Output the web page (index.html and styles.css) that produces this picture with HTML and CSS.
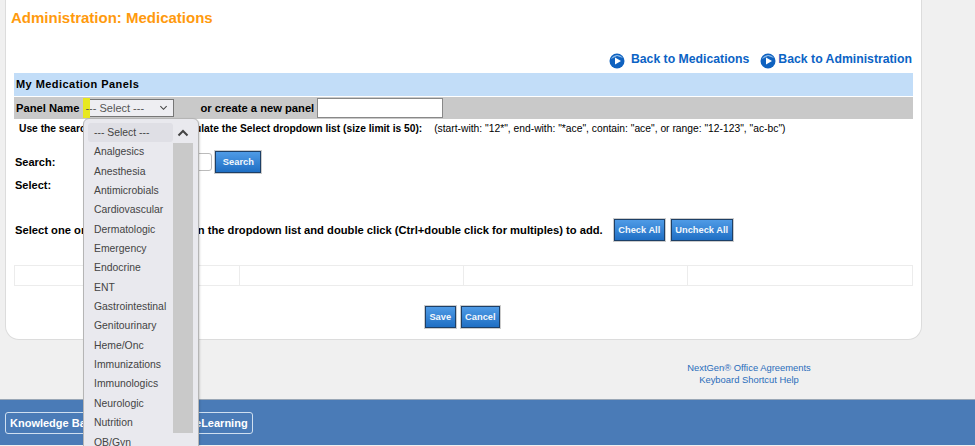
FILE: index.html
```html
<!DOCTYPE html>
<html lang="en">

<head>
  <meta charset="UTF-8">
  <title>Administration: Medications</title>
  <link rel="stylesheet" href="styles.css">
</head>

<body>
  <main class="card">
    <h1>Administration: Medications</h1>

    <div class="back-links">
      <a href="#"><svg class="go-icon" viewBox="0 0 16 16"><circle cx="8" cy="8" r="7.5" fill="#0f62c0"/><path d="M2 6 A7 7 0 0 1 14 5 L8 3 Z" fill="#8fbbe8"/><path d="M6 4.5 L12 8 L6 11.5 Z" fill="#fff"/></svg><span class="first-link">Back to Medications</span></a>
      <a href="#"><svg class="go-icon" viewBox="0 0 16 16"><circle cx="8" cy="8" r="7.5" fill="#0f62c0"/><path d="M2 6 A7 7 0 0 1 14 5 L8 3 Z" fill="#8fbbe8"/><path d="M6 4.5 L12 8 L6 11.5 Z" fill="#fff"/></svg>Back to Administration</a>
    </div>

    <div class="panel-title">My Medication Panels</div>

    <div class="panel-name">
      <label>Panel Name</label>
      <div class="select-box"><span class="mark"></span><span class="select-text">--- Select ---</span>
        <svg class="chev" viewBox="0 0 10 6"><path d="M1.5 1 L5 4.5 L8.5 1" fill="none" stroke="#444" stroke-width="1.2"/></svg>
      </div>
      <span class="or-create">or create a new panel</span>
      <input class="new-panel" type="text">
    </div>

    <p class="help"><b>Use the search criteria below to populate the Select dropdown list (size limit is 50):</b> <span class="help-eg">(start-with: "12*", end-with: "*ace", contain: "ace", or range: "12-123", "ac-bc")</span></p>

    <div class="search-row">
      <label>Search:</label>
      <input class="search-input" type="text">
      <button class="btn">Search</button>
    </div>
    <div class="select-row"><label>Select:</label></div>

    <div class="add-row">
      <b>Select one or more medication(s) in the dropdown list and double click (Ctrl+double click for multiples) to add.</b>
      <button class="btn">Check All</button>
      <button class="btn">Uncheck All</button>
    </div>

    <div class="empty-table">
      <div></div><div></div><div></div><div></div>
    </div>

    <div class="actions">
      <button class="btn">Save</button>
      <button class="btn">Cancel</button>
    </div>
  </main>

  <div class="footer-links">
    <a href="#">NextGen&reg; Office Agreements</a>
    <a href="#">Keyboard Shortcut Help</a>
  </div>

  <footer>
    <a href="#">Knowledge Base</a>
    <a href="#">eLearning</a>
  </footer>

  <div class="dropdown">
    <ul>
      <li class="current">--- Select ---</li>
      <li>Analgesics</li>
      <li>Anesthesia</li>
      <li>Antimicrobials</li>
      <li>Cardiovascular</li>
      <li>Dermatologic</li>
      <li>Emergency</li>
      <li>Endocrine</li>
      <li>ENT</li>
      <li>Gastrointestinal</li>
      <li>Genitourinary</li>
      <li>Heme/Onc</li>
      <li>Immunizations</li>
      <li>Immunologics</li>
      <li>Neurologic</li>
      <li>Nutrition</li>
      <li>OB/Gyn</li>
    </ul>
    <div class="scrollbar">
      <div class="scroll-up"><svg viewBox="0 0 12 8"><path d="M1.5 6.5 L6 2 L10.5 6.5" fill="none" stroke="#444" stroke-width="2"/></svg></div>
      <div class="scroll-thumb"></div>
    </div>
  </div>
</body>
</html>
```

FILE: styles.css
```css
* {
  box-sizing: border-box;
}

html, body {
  height: 446px;
  overflow: hidden;
}

body {
  margin: 0;
  position: relative;
  background-color: #f0f0f0;
  font-family: "Liberation Sans", Arial, sans-serif;
  font-size: 11px;
  color: #000;
}

.card {
  width: 917px;
  height: 340px;
  margin-left: 5px;
  padding: 9px 8px 0 8px;
  background-color: #fff;
  border: 1px solid #dcdcdc;
  border-top: 0;
  border-radius: 0 0 14px 14px;
}

h1 {
  margin: 0 0 0 -3px;
  font-size: 15px;
  line-height: 18px;
  color: #ff9a0d;
}

.back-links {
  display: flex;
  justify-content: flex-end;
  gap: 11px;
  height: 18px;
  margin-top: 23px;
  padding-right: 1px;
  font-size: 12.25px;
  font-weight: bold;
  line-height: 18px;
}

.back-links a {
  display: flex;
  align-items: center;
  color: #0b63c5;
  text-decoration: none;
}

.first-link {
  margin-left: 4px;
}

.go-icon {
  width: 16px;
  height: 16px;
  margin: 3px 2px 0 0;
}

.panel-title {
  height: 23px;
  margin-top: 5px;
  padding-left: 2px;
  background-color: #c2ddf8;
  font-size: 11px;
  font-weight: bold;
  letter-spacing: 0.45px;
  line-height: 23px;
}

.panel-name {
  display: flex;
  align-items: center;
  height: 22px;
  margin-top: 1px;
  padding-left: 2px;
  background-color: #c9c9c9;
  font-size: 11.2px;
  font-weight: bold;
}

.select-box {
  position: relative;
  width: 91px;
  height: 18px;
  margin-left: 4px;
  padding-left: 1px;
  background-color: #eeeef2;
  border: 1px solid #777;
  font-size: 11px;
  font-weight: normal;
  line-height: 16px;
  color: #555;
  white-space: nowrap;
}

.mark {
  position: absolute;
  left: -1px;
  top: -2px;
  width: 7px;
  height: 20px;
  background-color: #e8e820;
}

.select-text {
  position: relative;
}

.chev {
  position: absolute;
  right: 5px;
  top: 5px;
  width: 9px;
  height: 6px;
}

.or-create {
  margin-left: 26px;
}

.new-panel {
  width: 126px;
  height: 20px;
  margin: 0 0 0 3px;
  padding: 0;
  background-color: #fff;
  border: 1px solid #888;
}

.help {
  margin: 3px 0 0 5px;
  font-size: 10.25px;
  line-height: 13px;
  white-space: nowrap;
}

.help-eg {
  margin-left: 9px;
  font-size: 10.3px;
}

.search-row {
  display: flex;
  align-items: center;
  height: 22px;
  margin-top: 16px;
  padding-left: 1px;
  font-weight: bold;
}

.search-input {
  width: 127px;
  height: 18px;
  margin: 0 3px 0 30px;
  padding: 0;
  border: 1px solid #bbb;
  border-radius: 3px;
}

.select-row {
  margin-top: 6px;
  padding-left: 1px;
  font-weight: bold;
  line-height: 13px;
}

.add-row {
  display: flex;
  align-items: center;
  gap: 6px;
  height: 24px;
  margin-top: 26px;
  padding-left: 1px;
  font-size: 11.2px;
  white-space: nowrap;
}

.add-row b {
  margin-right: 5px;
}

.btn {
  height: 22px;
  padding: 0 3.5px;
  background: linear-gradient(#4f9be6, #1f6fc4);
  border: 1px solid #1d3f66;
  border-radius: 0;
  box-shadow: 0 0 0 1px #ccc;
  font-family: inherit;
  font-size: 9.3px;
  font-weight: bold;
  color: #f2f7fc;
}

.search-row .btn {
  width: 46px;
}

.empty-table {
  display: grid;
  grid-template-columns: 225px 224px 224px 1fr;
  height: 21px;
  margin-top: 23px;
  border: 1px solid #ececec;
}

.empty-table div {
  border-right: 1px solid #ececec;
}

.empty-table div:last-child {
  border-right: 0;
}

.actions {
  display: flex;
  justify-content: center;
  gap: 5px;
  margin-top: 20px;
  padding-right: 2px;
}

.footer-links {
  display: flex;
  flex-direction: column;
  align-items: center;
  width: 250px;
  margin: 22px 0 0 624px;
  font-size: 9.4px;
  line-height: 12px;
}

.footer-links a {
  color: #2a6dbb;
  text-decoration: none;
}

footer {
  display: flex;
  gap: 5px;
  height: 46px;
  margin-top: 13px;
  padding: 12px 0 0 5px;
  background-color: #4a7bb7;
  border-top: 1px solid #9aa7b6;
}

footer a {
  height: 22px;
  padding: 0 4px 0 4px;
  border: 1px solid #cfdff0;
  border-radius: 3px;
  font-size: 11px;
  font-weight: bold;
  line-height: 20px;
  color: #fff;
  text-decoration: none;
}

footer a + a {
  margin-left: 82px;
}

.dropdown {
  position: absolute;
  left: 83px;
  top: 118px;
  display: flex;
  width: 116px;
  height: 340px;
  padding: 4px 5px 0 4px;
  background-color: #e9e9ee;
  border: 1px solid #b5b5b5;
  border-radius: 6px;
  box-shadow: 1px 1px 2px rgba(0, 0, 0, 0.15);
  overflow: hidden;
}

.dropdown ul {
  flex: 1;
  margin: 0;
  padding: 0;
  list-style: none;
  font-size: 10.4px;
  color: #444;
}

.dropdown li {
  height: 19.35px;
  padding-left: 6px;
  line-height: 19.35px;
  white-space: nowrap;
}

.dropdown li.current {
  background-color: #dfdfe5;
  border-radius: 3px;
}

.scrollbar {
  width: 20px;
}

.scroll-up {
  display: flex;
  align-items: center;
  justify-content: center;
  height: 20px;
}

.scroll-up svg {
  width: 12px;
  height: 8px;
}

.scroll-thumb {
  height: 290px;
  background-color: #c9c9c9;
}
```
